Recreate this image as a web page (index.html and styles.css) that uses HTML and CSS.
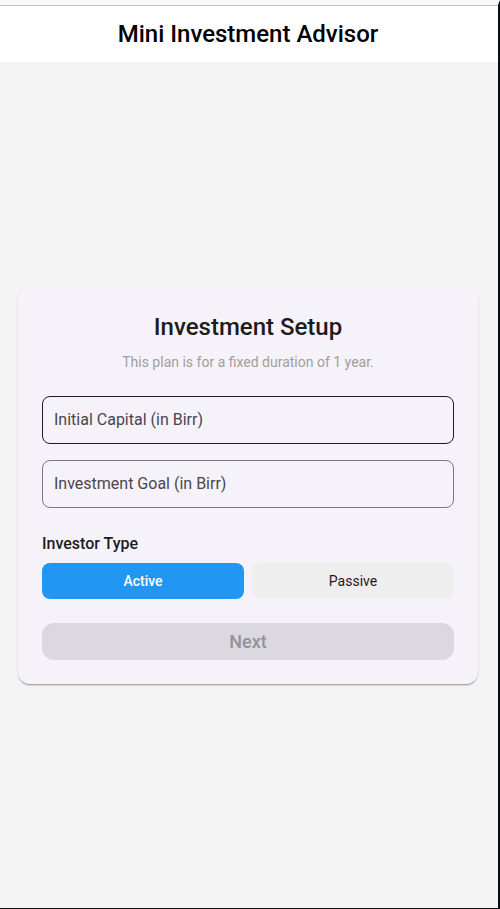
FILE: index.html
```html
<!DOCTYPE html>
<html lang="en">
<head>
  <meta charset="utf-8">
  <meta name="viewport" content="width=device-width, initial-scale=1">
  <title>Mini Investment Advisor</title>
  <link rel="stylesheet" href="styles.css">
</head>
<body>
  <div class="app">
    <header class="app-bar">
      <h1 class="app-title">Mini Investment Advisor</h1>
    </header>
    <main class="content">
      <form class="card">
        <h2 class="card-title">Investment Setup</h2>
        <p class="card-note">This plan is for a fixed duration of 1 year.</p>
        <input class="field field-hover" type="text" inputmode="decimal" aria-label="Initial Capital (in Birr)" placeholder="Initial Capital (in Birr)">
        <input class="field" type="text" inputmode="decimal" aria-label="Investment Goal (in Birr)" placeholder="Investment Goal (in Birr)">
        <h3 class="group-title" id="investor-type">Investor Type</h3>
        <div class="choices" role="group" aria-labelledby="investor-type">
          <button class="choice choice-selected" type="button" aria-pressed="true">Active</button>
          <button class="choice" type="button" aria-pressed="false">Passive</button>
        </div>
        <button class="next" type="submit" disabled>Next</button>
      </form>
    </main>
  </div>
</body>
</html>
```
FILE: styles.css
```css
* {
  box-sizing: border-box;
}

body {
  margin: 0;
  font-family: Roboto, "Liberation Sans", sans-serif;
  color: #1d1b20;
  background: #0c0d0e;
}

.app {
  display: flex;
  flex-direction: column;
  min-height: 100vh;
  border-top: 5px solid #f9f9f9;
  border-right: 2px solid #0c0d0e;
  border-bottom: 1px solid #0c0d0e;
  background: #f4f4f4;
}

.app-bar {
  height: 57px;
  padding-right: 2px;
  border-top: 1px solid #c4c2c4;
  background: #ffffff;
  text-align: center;
}

.app-title {
  margin: 0;
  font-size: 24px;
  font-weight: 500;
  line-height: 56px;
  color: #000000;
}

.content {
  display: flex;
  flex: 1;
  align-items: center;
  padding: 20px 20px 20px 18px;
}

.card {
  display: flex;
  flex: 1;
  flex-direction: column;
  min-width: 0;
  padding: 24px;
  border-radius: 12px;
  background: #f6f2f9;
  box-shadow: 0 2px 2px -1px rgba(0, 0, 0, 0.3), 0 1px 2px rgba(0, 0, 0, 0.14);
}

.card-title {
  margin: 0 0 8px;
  font-size: 24px;
  font-weight: 500;
  line-height: 34px;
  text-align: center;
}

.card-note {
  margin: 0 0 24px;
  font-size: 14px;
  line-height: 20px;
  color: #9e9e9e;
  text-align: center;
}

.field {
  width: 100%;
  height: 48px;
  margin: 0 0 16px;
  padding: 0 11px 2px;
  border: 1px solid #79747e;
  border-radius: 8px;
  background: transparent;
  color: #1d1b20;
  font: inherit;
  font-size: 16px;
}

.field::placeholder {
  color: #49454f;
  opacity: 1;
}

.field-hover {
  border-color: #1d1b20;
}

.group-title {
  margin: 8px 0;
  font-size: 16px;
  font-weight: 500;
  line-height: 23px;
}

.choices {
  display: grid;
  grid-template-columns: 1fr 1fr;
  gap: 8px;
}

.choice {
  height: 36px;
  border: 0;
  border-radius: 8px;
  background: #eeeeee;
  color: #1d1b20;
  font: inherit;
  font-size: 14px;
}

.choice-selected {
  background: #2196f3;
  color: #ffffff;
  font-weight: 500;
}

.next {
  height: 37px;
  margin-top: 24px;
  border: 0;
  border-radius: 12px;
  background: #dcd8df;
  color: #949197;
  font: inherit;
  font-size: 18px;
  font-weight: 500;
}
```
